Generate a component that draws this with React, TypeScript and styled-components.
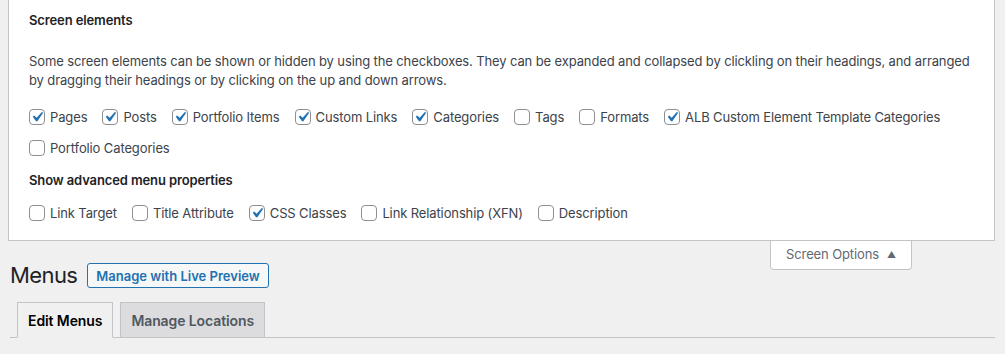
import React from 'react';
import styled, { createGlobalStyle } from 'styled-components';

const GlobalStyle = createGlobalStyle`
    html, body {
        margin: 0;
        padding: 0;
        background: #f0f0f1;
    }
    body {
        font-family: Inter, "Liberation Sans", sans-serif;
        font-size: 13px;
        letter-spacing: -0.12px;
        color: #3c434a;
    }
`;

type Option = { label: string; checked: boolean };

const menuBoxes: Option[] = [
    { label: 'Pages', checked: true },
    { label: 'Posts', checked: true },
    { label: 'Portfolio Items', checked: true },
    { label: 'Custom Links', checked: true },
    { label: 'Categories', checked: true },
    { label: 'Tags', checked: false },
    { label: 'Formats', checked: false },
    { label: 'ALB Custom Element Template Categories', checked: true },
    { label: 'Portfolio Categories', checked: false },
];

const advanced: Option[] = [
    { label: 'Link Target', checked: false },
    { label: 'Title Attribute', checked: false },
    { label: 'CSS Classes', checked: true },
    { label: 'Link Relationship (XFN)', checked: false },
    { label: 'Description', checked: false },
];

const Check: React.FC<Option> = ({ label, checked }) => (
    <CheckLabel>
        <Box $checked={checked}>
            {checked && (
                <svg width="20" height="20" viewBox="0 0 20 20">
                    <path d="M14.83 4.89l1.34.94-5.81 8.38H9.02L5.78 9.67l1.34-1.25 2.57 2.4z" fill="#2271b1" />
                </svg>
            )}
        </Box>
        {label}
    </CheckLabel>
);

const App: React.FC = () => {
    return (
        <Page>
            <GlobalStyle />
            <ScreenMeta>
                <Heading>Screen elements</Heading>
                <Intro>
                    Some screen elements can be shown or hidden by using the checkboxes. They can be expanded and collapsed by clickling on their headings, and arranged by dragging their headings or by clicking on the up and down arrows.
                </Intro>
                <Prefs>
                    {menuBoxes.map((o) => (
                        <Check key={o.label} {...o} />
                    ))}
                </Prefs>
                <SubHeading>Show advanced menu properties</SubHeading>
                <Prefs>
                    {advanced.map((o) => (
                        <Check key={o.label} {...o} />
                    ))}
                </Prefs>
            </ScreenMeta>
            <MetaLinks>
                <MetaToggle>
                    Screen Options <Arrow>▲</Arrow>
                </MetaToggle>
            </MetaLinks>
            <Wrap>
                <TitleRow>
                    <Title>Menus</Title>
                    <ActionButton>Manage with Live Preview</ActionButton>
                </TitleRow>
                <TabBar>
                    <Tab $active>Edit Menus</Tab>
                    <Tab>Manage Locations</Tab>
                </TabBar>
            </Wrap>
        </Page>
    );
};

export default App;

const Page = styled.div`
    width: 1005px;
    height: 354px;
    overflow: hidden;
`;

const ScreenMeta = styled.div`
    margin: 0 10px 0 8px;
    background: #fff;
    border: 1px solid #c3c4c7;
    border-top: none;
    padding: 11px 20px 12px 20px;
`;

const Heading = styled.h5`
    margin: 0;
    font-size: 13px;
    line-height: 18px;
    font-weight: 600;
    color: #1d2327;
`;

const Intro = styled.p`
    margin: 23px 0 11px;
    line-height: 19px;
    color: #3c434a;
`;

const Prefs = styled.div`
    display: flex;
    flex-wrap: wrap;
    column-gap: 15px;
    row-gap: 0;
`;

const SubHeading = styled.h5`
    margin: 8px 0 8px;
    font-size: 13px;
    line-height: 18px;
    font-weight: 600;
    color: #1d2327;
`;

const CheckLabel = styled.label`
    display: inline-flex;
    align-items: center;
    gap: 5px;
    height: 31px;
    color: #3c434a;
    white-space: nowrap;
`;

const Box = styled.span<{ $checked: boolean }>`
    position: relative;
    width: 16px;
    height: 16px;
    box-sizing: border-box;
    border: 1px solid #8c8f94;
    border-radius: 4px;
    background: #fff;
    flex: none;
    svg {
        position: absolute;
        left: -3px;
        top: -3px;
    }
`;

const MetaLinks = styled.div`
    float: right;
    margin-right: 93px;
`;

const MetaToggle = styled.button`
    box-sizing: border-box;
    width: 142px;
    height: 29px;
    background: #fff;
    border: 1px solid #c3c4c7;
    border-top: none;
    border-radius: 0 0 4px 4px;
    font-family: inherit;
    font-size: 13px;
    letter-spacing: -0.12px;
    color: #646970;
    padding: 0 0 2px;
    display: flex;
    align-items: center;
    justify-content: center;
    gap: 8px;
`;

const Arrow = styled.span`
    font-size: 9px;
    color: #646970;
`;

const Wrap = styled.div`
    margin: 0 10px 0 10px;
    padding-top: 20px;
`;

const TitleRow = styled.div`
    display: flex;
    align-items: center;
    gap: 10px;
`;

const Title = styled.h1`
    margin: 0;
    font-size: 22px;
    letter-spacing: -0.6px;
    font-weight: 400;
    line-height: 29px;
    color: #1d2327;
`;

const ActionButton = styled.a`
    box-sizing: border-box;
    height: 25px;
    padding: 0 8px;
    display: inline-flex;
    align-items: center;
    border: 1px solid #2271b1;
    border-radius: 3px;
    background: #f6f7f7;
    color: #2271b1;
    font-size: 13px;
    font-weight: 600;
    letter-spacing: 0;
`;

const TabBar = styled.nav`
    display: flex;
    margin-top: 12px;
    border-bottom: 1px solid #c3c4c7;
    padding-left: 7px;
    gap: 7px;
`;

const Tab = styled.a<{ $active?: boolean }>`
    box-sizing: border-box;
    height: 36px;
    margin-bottom: -1px;
    padding: 0 10px;
    display: flex;
    align-items: center;
    border: 1px solid #c3c4c7;
    border-bottom-color: ${(p) => (p.$active ? '#f0f0f1' : '#c3c4c7')};
    background: ${(p) => (p.$active ? '#f0f0f1' : '#dcdcde')};
    color: ${(p) => (p.$active ? '#000' : '#50575e')};
    font-size: 14px;
    font-weight: 600;
    letter-spacing: -0.1px;
`;
